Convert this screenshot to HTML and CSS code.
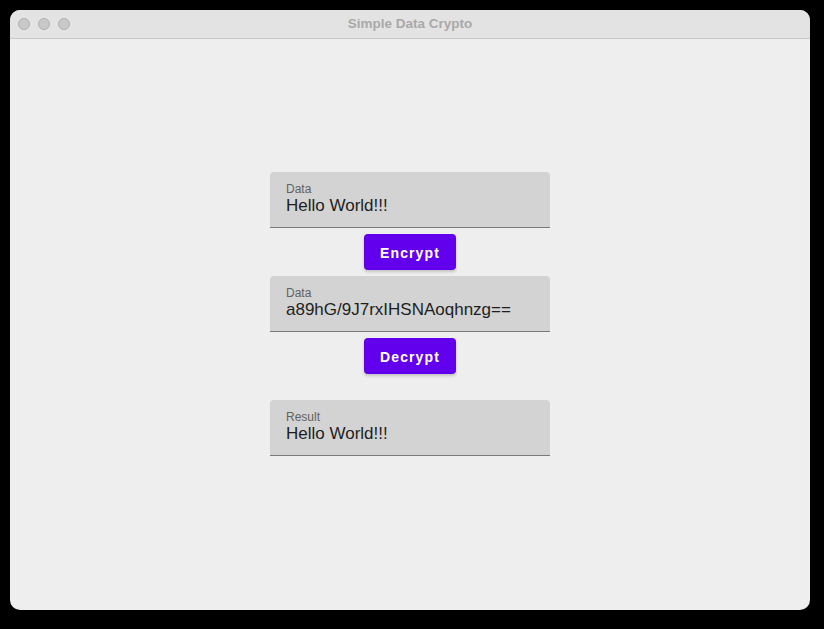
FILE: index.html
```html
<!DOCTYPE html>
<html>
<head>
<meta charset="utf-8">
<link rel="stylesheet" href="styles.css">
</head>
<body>
<div class="window">
  <div class="titlebar">
    <div class="lights"><span class="light"></span><span class="light"></span><span class="light"></span></div>
    <div class="title">Simple Data Crypto</div>
  </div>
  <div class="content">
    <div class="form">
      <div class="field"><div class="label">Data</div><div class="value">Hello World!!!</div></div>
      <button class="btn">Encrypt</button>
      <div class="field"><div class="label">Data</div><div class="value">a89hG/9J7rxIHSNAoqhnzg==</div></div>
      <button class="btn">Decrypt</button>
      <div class="field result"><div class="label">Result</div><div class="value">Hello World!!!</div></div>
    </div>
  </div>
</div>
</body>
</html>
```
FILE: styles.css
```css
html, body { margin: 0; padding: 0; background: #000; }
body { width: 824px; height: 629px; font-family: "Liberation Sans", Arial, sans-serif; }
.window {
  position: relative;
  margin: 10px 0 0 10px;
  width: 800px;
  height: 600px;
  background: #eeeeee;
  border-radius: 10px;
  overflow: hidden;
  display: flex;
  flex-direction: column;
}
.titlebar {
  height: 28px;
  background: #e3e3e3;
  border-bottom: 1px solid #c8c8c8;
  display: flex;
  align-items: center;
  position: relative;
}
.lights { display: flex; gap: 8px; padding-left: 8px; }
.light {
  box-sizing: border-box;
  width: 12px; height: 12px; border-radius: 50%;
  background: #c8c8c8; border: 1px solid #b0b0b0;
}
.title {
  position: absolute; left: 0; right: 0; top: 0; height: 28px;
  line-height: 28px; text-align: center;
  font-size: 13.5px; font-weight: bold; color: #a9a9a9;
  pointer-events: none;
}
.content { flex: 1; display: flex; justify-content: center; }
.form {
  width: 280px;
  padding-top: 133px;
  display: flex; flex-direction: column; align-items: center;
}
.field {
  width: 280px; box-sizing: border-box; height: 56px;
  background: #d3d3d3;
  border-radius: 4px 4px 0 0;
  border-bottom: 1px solid #7a7a7a;
  padding: 9.5px 16px 0;
}
.label { font-size: 12px; line-height: 14px; color: #626262; }
.value { font-size: 17px; line-height: 20px; color: #1e1e1e; }
.btn {
  margin: 6px 0;
  height: 36px;
  padding: 1px 16px 0;
  border: none; border-radius: 4px;
  background: #6200ee; color: #fff;
  font-family: "Liberation Sans", Arial, sans-serif;
  font-size: 14px; font-weight: bold; letter-spacing: 1.1px;
  box-shadow: 0 2px 3px rgba(0,0,0,0.18);
}
.result { margin-top: 20px; }
```
